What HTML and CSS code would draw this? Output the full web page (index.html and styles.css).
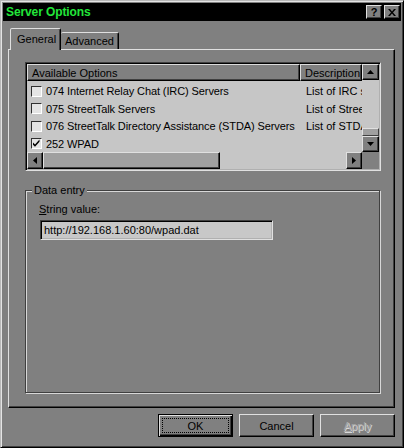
FILE: index.html
```html
<!DOCTYPE html>
<html>
<head>
<meta charset="utf-8">
<link rel="stylesheet" href="styles.css">
</head>
<body>
<div class="window">
  <div class="titlebar">
    <span class="title">Server Options</span>
    <div class="tb-buttons">
      <div class="tb-btn help">?</div>
      <div class="tb-btn">
        <svg width="8" height="7" viewBox="0 0 8 7"><path d="M0 0h2l2 2.5L6 0h2L5 3.5 8 7H6L4 4.5 2 7H0l3-3.5z" fill="#000"/></svg>
      </div>
    </div>
  </div>
  <div class="body">
    <div class="tabs">
      <div class="tab active">General</div>
      <div class="tab">Advanced</div>
    </div>
    <div class="panel">
      <div class="list">
        <div class="list-content">
          <div class="header">
            <div class="hcell col1">Available Options</div>
            <div class="hcell col2">Description</div>
          </div>
          <div class="row">
            <div class="cell col1"><span class="check"></span>074 Internet Relay Chat (IRC) Servers</div>
            <div class="cell col2">List of IRC servers</div>
          </div>
          <div class="row">
            <div class="cell col1"><span class="check"></span>075 StreetTalk Servers</div>
            <div class="cell col2">List of StreetTalk servers</div>
          </div>
          <div class="row">
            <div class="cell col1"><span class="check"></span>076 StreetTalk Directory Assistance (STDA) Servers</div>
            <div class="cell col2">List of STDA servers</div>
          </div>
          <div class="row">
            <div class="cell col1"><span class="check checked"><svg width="9" height="9" viewBox="0 0 9 9"><path d="M1 3.5l2 2 4.5-5v2.2L3 7.8 1 5.8z" fill="#000"/></svg></span>252 WPAD</div>
            <div class="cell col2"></div>
          </div>
        </div>
        <div class="vscroll">
          <div class="sbtn"><svg width="7" height="4" viewBox="0 0 7 4"><polygon points="3.5,0 7,4 0,4" fill="#000"/></svg></div>
          <div class="vtrack"><div class="vthumb"></div></div>
          <div class="sbtn"><svg width="7" height="4" viewBox="0 0 7 4"><polygon points="0,0 7,0 3.5,4" fill="#000"/></svg></div>
        </div>
        <div class="hscroll">
          <div class="sbtn h"><svg width="4" height="7" viewBox="0 0 4 7"><polygon points="4,0 4,7 0,3.5" fill="#000"/></svg></div>
          <div class="hthumb"></div>
          <div class="htrack"></div>
          <div class="sbtn h"><svg width="4" height="7" viewBox="0 0 4 7"><polygon points="0,0 4,3.5 0,7" fill="#000"/></svg></div>
        </div>
        <div class="corner"></div>
      </div>
      <div class="group">
        <div class="group-label">Data entry</div>
        <div class="field-label"><u>S</u>tring value:</div>
        <div class="input">http://192.168.1.60:80/wpad.dat</div>
      </div>
    </div>
    <div class="buttons">
      <div class="btn default"><span class="focus">OK</span></div>
      <div class="btn">Cancel</div>
      <div class="btn disabled"><span><u>A</u>pply</span></div>
    </div>
  </div>
</div>
</body>
</html>
```

FILE: styles.css
```css
* { box-sizing: border-box; }
html, body { margin: 0; padding: 0; }
body {
  width: 404px;
  height: 448px;
  background: #808080;
  font-family: "Liberation Sans", Arial, sans-serif;
  font-size: 11px;
  color: #000;
  overflow: hidden;
}
.window {
  width: 404px;
  height: 448px;
  background: #808080;
  border: 1px solid;
  border-color: #b8b8b8 #000 #000 #b8b8b8;
  box-shadow: inset 1px 1px #e4e4e4, inset -1px -1px #404040;
  padding: 2px;
  display: flex;
  flex-direction: column;
}
.titlebar {
  height: 18px;
  background: #000;
  display: flex;
  align-items: center;
  justify-content: space-between;
  padding: 0 1px 0 3px;
  flex: none;
}
.title {
  color: #22e63a;
  font-weight: bold;
  font-size: 12px;
  letter-spacing: -0.1px;
}
.tb-buttons { display: flex; gap: 2px; }
.tb-btn {
  width: 16px;
  height: 14px;
  background: #808080;
  border: 1px solid;
  border-color: #e0e0e0 #000 #000 #e0e0e0;
  box-shadow: inset -1px -1px #404040;
  display: flex;
  align-items: center;
  justify-content: center;
  font-weight: bold;
  font-size: 11px;
  line-height: 1;
}
.body {
  flex: 1;
  display: flex;
  flex-direction: column;
  padding: 7px 6px 0 5px;
}
.tabs {
  height: 21px;
  display: flex;
  align-items: flex-end;
  padding-left: 2px;
  flex: none;
}
.tab {
  height: 17px;
  padding: 0 4px;
  border: 1px solid;
  border-bottom: none;
  border-color: #e0e0e0 #000 transparent #e0e0e0;
  box-shadow: inset -1px 0 #404040;
  border-radius: 2px 2px 0 0;
  display: flex;
  align-items: center;
  background: #808080;
}
.tab + .tab { border-left: none; }
.tab.active {
  height: 22px;
  margin-bottom: -1px;
  width: 51px;
  padding: 0 6px;
  position: relative;
  z-index: 1;
  padding-bottom: 2px;
}
.panel {
  height: 359px;
  flex: none;
  border: 1px solid;
  border-color: #e0e0e0 #000 #000 #e0e0e0;
  box-shadow: inset -1px -1px #404040;
  padding: 12px 0 0 16px;
}
.list {
  width: 356px;
  height: 109px;
  border: 1px solid;
  border-color: #404040 #e0e0e0 #e0e0e0 #404040;
  box-shadow: inset 1px 1px #000, inset -1px -1px #b0b0b0;
  padding: 1px;
  background: #c6c6c6;
  display: grid;
  grid-template-columns: 335px 17px;
  grid-template-rows: 88px 17px;
}
.list-content { overflow: hidden; }
.header { display: flex; height: 17px; margin-bottom: 1.5px; }
.hcell {
  background: #808080;
  border: 1px solid;
  border-color: #dcdcdc #000 #000 #dcdcdc;
  box-shadow: inset -1px -1px #404040;
  display: flex;
  align-items: center;
  white-space: nowrap;
  overflow: hidden;
}
.col1 { width: 273px; flex: none; padding-left: 4px; }
.col2 { width: 62px; flex: none; padding-left: 5px; }
.hcell.col2 { padding-left: 4px; }
.row { display: flex; height: 17.5px; }
.cell {
  display: flex;
  align-items: center;
  white-space: nowrap;
  overflow: hidden;
}
.row .col1 { padding-left: 4px; letter-spacing: -0.1px; }
.row .col2 { padding-left: 6px; }
.check {
  width: 11px;
  height: 11px;
  flex: none;
  background: #e4e4e4;
  border: 1px solid;
  border-color: #303030 #fff #fff #303030;
  margin-right: 4px;
  display: flex;
  align-items: center;
  justify-content: center;
}
.vscroll {
  display: flex;
  flex-direction: column;
  grid-row: 1;
  grid-column: 2;
}
.sbtn {
  width: 17px;
  height: 16px;
  flex: none;
  background: #808080;
  border: 1px solid;
  border-color: #e0e0e0 #000 #000 #e0e0e0;
  box-shadow: inset -1px -1px #404040;
  display: flex;
  align-items: center;
  justify-content: center;
}
.sbtn.h { width: 16px; height: 17px; }
.vtrack {
  flex: 1;
  background: #c6c6c6;
  display: flex;
  flex-direction: column;
  justify-content: flex-end;
}
.vthumb {
  height: 8px;
  background: #a0a0a0;
  border: 1px solid;
  border-color: #e0e0e0 #404040 #404040 #e0e0e0;
}
.hscroll {
  display: flex;
  grid-row: 2;
  grid-column: 1;
}
.hthumb {
  width: 177px;
  background: #a0a0a0;
  border: 1px solid;
  border-color: #e0e0e0 #000 #000 #e0e0e0;
  box-shadow: inset -1px -1px #404040;
}
.htrack { flex: 1; background: #c6c6c6; }
.corner { background: #808080; grid-row: 2; grid-column: 2; }
.group {
  position: relative;
  width: 355px;
  height: 203px;
  margin-top: 19px;
  border: 1px solid #404040;
  box-shadow: inset 1px 1px #d8d8d8, 1px 1px #d8d8d8;
  padding: 12px 0 0 13px;
}
.group-label {
  position: absolute;
  top: -7px;
  left: 6px;
  padding: 0 2px;
  line-height: 13px;
  background: #808080;
}
.field-label { line-height: 13px; }
.input {
  width: 233px;
  height: 20px;
  margin: 4px 0 0 1px;
  background: #c8c8c8;
  border: 1px solid;
  border-color: #404040 #e0e0e0 #e0e0e0 #404040;
  box-shadow: inset 1px 1px #000, inset -1px -1px #b0b0b0;
  padding-left: 3px;
  display: flex;
  align-items: center;
}
.buttons {
  display: flex;
  justify-content: flex-end;
  gap: 6px;
  margin-top: 6px;
}
.btn {
  width: 75px;
  height: 23px;
  background: #808080;
  border: 1px solid;
  border-color: #e0e0e0 #000 #000 #e0e0e0;
  box-shadow: inset -1px -1px #404040;
  display: flex;
  align-items: center;
  justify-content: center;
}
.btn.default {
  border: 1px solid #000;
  box-shadow: inset 1px 1px #e0e0e0, inset -1px -1px #000, inset -2px -2px #404040;
  padding: 3px;
}
.focus {
  width: 100%;
  height: 100%;
  border: 1px dotted #000;
  display: flex;
  align-items: center;
  justify-content: center;
}
.btn.disabled span {
  color: #a8a8a8;
  text-shadow: 1px 1px #d8d8d8;
}
```
